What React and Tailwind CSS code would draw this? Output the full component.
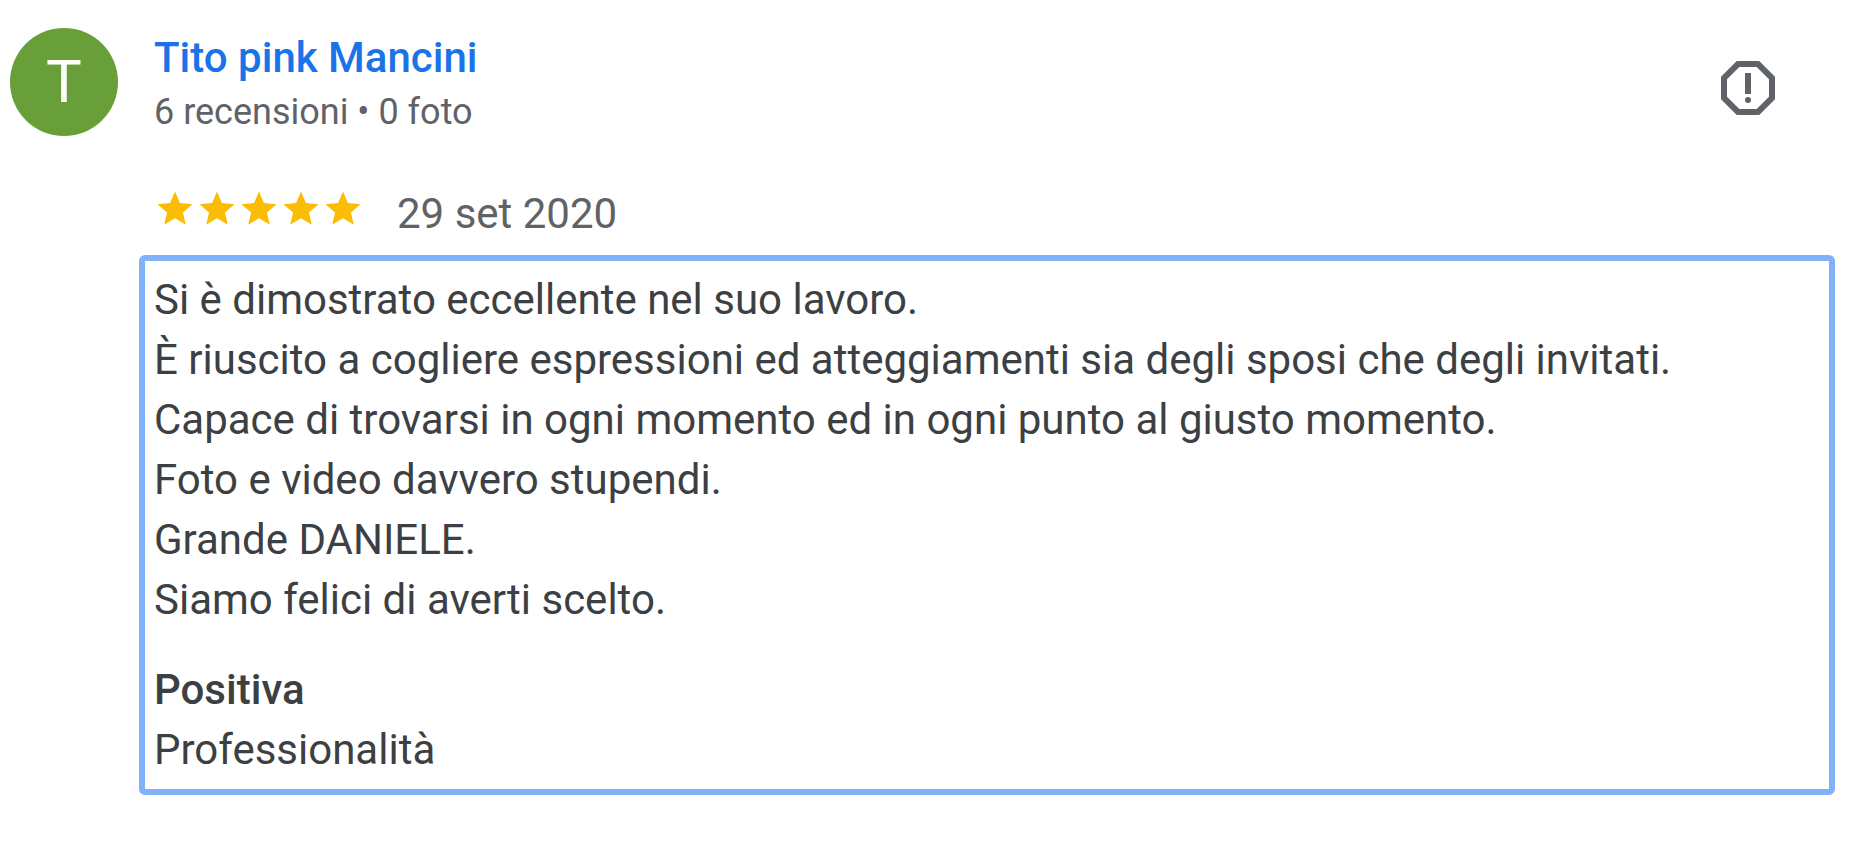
const reviewLines = [
  'Si è dimostrato eccellente nel suo lavoro.',
  'È riuscito a cogliere espressioni ed atteggiamenti sia degli sposi che degli invitati.',
  'Capace di trovarsi in ogni momento ed in ogni punto al giusto momento.',
  'Foto e video davvero stupendi.',
  'Grande DANIELE.',
  'Siamo felici di averti scelto.',
];

function Star() {
  return (
    <svg viewBox="0 0 24 24" className="size-[42px]" fill="currentColor" aria-hidden="true">
      <path d="M12 17.27L18.18 21l-1.64-7.03L22 9.24l-7.19-.61L12 2 9.19 8.63 2 9.24l5.46 4.73L5.82 21z" />
    </svg>
  );
}

function ReportIcon() {
  return (
    <svg viewBox="0 0 24 24" className="size-18" fill="currentColor" aria-hidden="true">
      <path d="M15.73 3H8.27L3 8.27v7.46L8.27 21h7.46L21 15.73V8.27L15.73 3zM19 14.9L14.9 19H9.1L5 14.9V9.1L9.1 5h5.8L19 9.1v5.8z" />
      <circle cx="12" cy="16" r="1" />
      <path d="M11 7h2v7h-2z" />
    </svg>
  );
}

export default function App() {
  return (
    <main className="min-h-screen bg-white pt-7 pr-[35px] pb-14 pl-2.5 font-['Roboto',sans-serif] text-[42px] leading-[60px] text-[#3c4043]">
      <article>
        <header className="flex items-start gap-9">
          <div className="flex size-[108px] shrink-0 items-center justify-center rounded-full bg-[#689f38] text-[60px] text-white">
            T
          </div>
          <div className="min-w-0 flex-1">
            <a href="#profilo" className="block w-fit font-medium text-[#1a73e8]">
              Tito pink Mancini
            </a>
            <p className="text-4xl leading-[48px] text-[#5f6368]">6 recensioni • 0 foto</p>
          </div>
          <button type="button" aria-label="Segnala recensione" className="mt-6 mr-[51px] text-[#5f6368]">
            <ReportIcon />
          </button>
        </header>

        <div className="mt-12 flex items-start gap-[33px] pl-36 text-[#5f6368]">
          <div role="img" aria-label="5 stelle su 5" className="flex pt-1 text-[#fbbc04]">
            <Star />
            <Star />
            <Star />
            <Star />
            <Star />
          </div>
          <time dateTime="2020-09-29">29 set 2020</time>
        </div>

        <section
          tabIndex={0}
          className="mt-[11px] ml-[129px] rounded-md border-6 border-[#80b1fa] p-[9px] outline-none"
        >
          {reviewLines.map((line) => (
            <p key={line}>{line}</p>
          ))}
          <h2 className="mt-[30px] font-medium">Positiva</h2>
          <p>Professionalità</p>
        </section>
      </article>
    </main>
  );
}
